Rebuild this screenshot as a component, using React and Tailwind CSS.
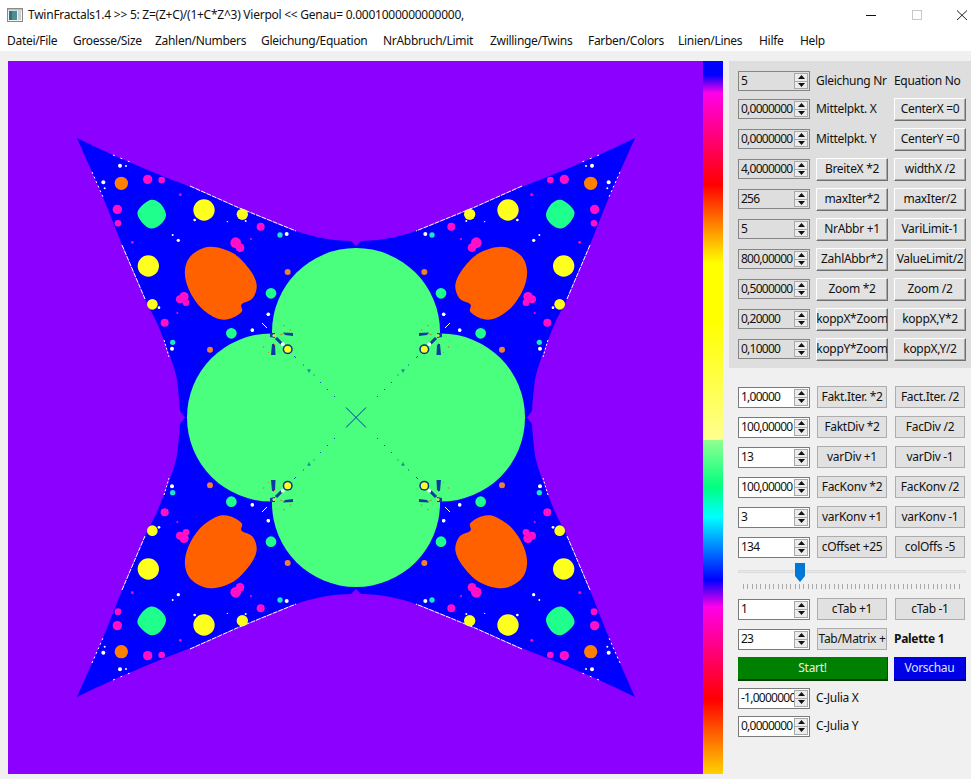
import React from "react";

const P = "#8c00ff", B = "#0000ff", G = "#4aff7e", O = "#ff6000", T = "#1eff8c", Y = "#ffff1e", M = "#ff10c8", W = "#ffffff";

const z = ([x, y]) => [60 + x / 3, 120 + y / 3];

function spline(p, closed) {
  const n = p.length;
  const at = (i) => (closed ? p[(i + n) % n] : p[Math.max(0, Math.min(n - 1, i))]);
  let d = "";
  const last = closed ? n : n - 1;
  for (let i = 0; i < last; i++) {
    const a = at(i - 1), b = at(i), c = at(i + 1), e = at(i + 2);
    const c1 = [b[0] + (c[0] - a[0]) / 6, b[1] + (c[1] - a[1]) / 6];
    const c2 = [c[0] - (e[0] - b[0]) / 6, c[1] - (e[1] - b[1]) / 6];
    d += `C${c1[0].toFixed(1)},${c1[1].toFixed(1)} ${c2[0].toFixed(1)},${c2[1].toFixed(1)} ${c[0].toFixed(1)},${c[1].toFixed(1)}`;
  }
  return d;
}

function smooth(points) {
  const p = points.map(z);
  return `M${p[0][0].toFixed(1)},${p[0][1].toFixed(1)}` + spline(p, true) + "Z";
}

const leftEdge = [[180, 411], [179, 398], [176, 375], [168, 351], [157, 323], [145, 299], [123, 247], [102, 195], [77, 138]];
const topEdge = [[77, 138], [113, 155], [160, 175], [193, 188], [237, 207], [293, 230], [327, 239], [351, 241]];
const outline = "M356,417.5L185,417.5L180,411" + spline(leftEdge, false) + spline(topEdge, false) + "L356,246Z";

const blobs = [
  ["#ff8000", 184, 190, 20], [M, 263, 178, 14], [M, 305, 180, 10], [M, 172, 268, 14], [M, 174, 310, 10],
  [M, 602, 320, 12], [M, 527, 368, 16], [M, 540, 383, 13], [M, 372, 530, 14], [M, 360, 538, 12], [M, 378, 548, 10],
  [M, 314, 608, 12], [T, 633, 520, 16], [T, 514, 640, 16], ["#19e6c8", 660, 345, 8], ["#19e6c8", 338, 667, 8],
  [Y, 432, 270, 32], [Y, 547, 283, 17], [Y, 265, 438, 32], [Y, 277, 553, 16],
  ["#f08030", 683, 456, 9], ["#f08030", 450, 689, 9],
  [W, 355, 361, 5], [W, 338, 345, 3], [W, 625, 583, 5], [W, 577, 631, 5], [W, 680, 342, 6], [W, 336, 686, 6],
  [W, 180, 137, 6], [W, 130, 187, 6], [W, 198, 138, 3], [W, 134, 205, 3], [W, 404, 300, 4], [W, 557, 303, 3], [W, 297, 563, 4], [W, 502, 305, 2],
  [M, 361, 224, 4], [M, 217, 367, 4], [M, 573, 357, 3], [M, 352, 579, 3],
];

function Quadrant({ transform }) {
  return (
    <g transform={transform}>
      <path fill={B} d={outline} />
      <polyline points="190,186 237,207 296,231" fill="none" stroke={W} strokeWidth="1" strokeDasharray="5 1" />
      <polyline points="113,155 135,164" fill="none" stroke={W} strokeWidth="1" strokeDasharray="2 6" />
      <polyline points="122,245 145,299" fill="none" stroke={W} strokeWidth="1" strokeDasharray="5 1" />
      <polyline points="92,172 103,197" fill="none" stroke={W} strokeWidth="1" strokeDasharray="2 3" />
      <polyline points="164,340 169,357" fill="none" stroke={W} strokeWidth="1" strokeDasharray="2 2" />
      <path fill={O} d={smooth([[450, 380], [520, 400], [570, 450], [590, 495], [578, 535], [545, 553], [545, 575], [510, 596], [470, 595], [420, 560], [385, 505], [375, 450], [395, 405]])} />
      <path fill={T} d={smooth([[270, 240], [300, 250], [318, 285], [300, 315], [270, 325], [242, 302], [234, 272]])} />
      {blobs.map(([c, x, y, r], i) => {
        const [cx, cy] = z([x, y]);
        return <circle key={i} cx={cx} cy={cy} r={r / 3} fill={c} />;
      })}
    </g>
  );
}

function Details({ transform }) {
  return (
    <g transform={transform}>
      <circle cx="268.3" cy="314.3" r="1.7" fill={W} />
      <circle cx="252.3" cy="330" r="1.7" fill={W} />
      <line x1="262" y1="323" x2="267" y2="328" stroke={W} strokeWidth="1" />
      <line x1="276" y1="338" x2="282" y2="344" stroke="#0a3ca0" strokeWidth="3" />
      <path d="M283,332.5L293,333L293,336L285,335Z" fill="#0a3ca0" />
      <path d="M272,344L275,344L275.5,355L271,355Z" fill="#0a3ca0" />
      <path d="M270,333L275,333L275,338L270,337Z" fill="#0a3ca0" />
      <circle cx="287.7" cy="349.3" r="5" fill="#05308c" />
      <circle cx="287.7" cy="349.3" r="3.5" fill={Y} />
      <circle cx="282.7" cy="344.3" r="2" fill="#e8fff0" />
      <circle cx="274" cy="335.5" r="1.6" fill="#d8e060" />
      {[[283, 325, 285, 326], [280, 335, 283, 334], [263, 346, 264, 348], [273, 343, 275, 345], [290, 329, 291, 331], [269, 353, 268, 352]].map((t, i) => (
        <line key={i} x1={t[0]} y1={t[1]} x2={t[2]} y2={t[3]} stroke="#c09028" strokeWidth="1" />
      ))}
      <line x1="294" y1="356" x2="296" y2="358" stroke="#0a5ca0" strokeWidth="1" />
      <rect x="303" y="364.5" width="1" height="1" fill="#0a5ca0" />
      <path d="M307.5,369.5h3v1h-1v2h-1v-2h-1z" fill="#0a5ca0" />
      <rect x="313.5" y="374.5" width="1" height="1" fill="#0a5ca0" />
      <rect x="320" y="382" width="1" height="1" fill="#0a5ca0" />
      <rect x="327" y="389" width="1" height="1" fill="#0a5ca0" />
      <rect x="334" y="396" width="1" height="1" fill="#0a5ca0" />
      <line x1="346" y1="407.5" x2="356" y2="417.5" stroke="#1030b8" strokeWidth="1" />
    </g>
  );
}

function Fractal() {
  const mx = "translate(712 0) scale(-1 1)";
  const my = "translate(0 835) scale(1 -1)";
  const mxy = "translate(712 835) scale(-1 -1)";
  return (
    <svg viewBox="8 61 695 713" className="block w-[695px] h-[713px] shrink-0">
      <rect x="8" y="61" width="695" height="713" fill={P} />
      <Quadrant />
      <Quadrant transform={mx} />
      <Quadrant transform={my} />
      <Quadrant transform={mxy} />
      <circle cx="356" cy="332" r="84" fill={G} />
      <circle cx="356" cy="503" r="84" fill={G} />
      <circle cx="271" cy="417.5" r="84" fill={G} />
      <circle cx="441" cy="417.5" r="84" fill={G} />
      <rect x="300" y="360" width="112" height="115" fill={G} />
      <Details />
      <Details transform={mx} />
      <Details transform={my} />
      <Details transform={mxy} />
    </svg>
  );
}

function Arrow({ up }) {
  return (
    <svg width="7" height="4" viewBox="0 0 7 4" className="block">
      <path d={up ? "M3.5,0L7,4H0Z" : "M0,0H7L3.5,4Z"} fill="#111" />
    </svg>
  );
}

function Spin({ value, light }) {
  return (
    <div
      className={`flex w-[72px] ${light ? "h-[21px] border-[#7a7a7a] bg-white" : "h-[20px] border-[#858585] bg-[#dedede]"} items-stretch border overflow-hidden`}
    >
      <div className="w-[55px] shrink-0 overflow-hidden whitespace-nowrap pl-[2px] leading-[18px] tracking-[-0.75px]">{value}</div>
      <div className="ml-auto mr-px my-px flex w-[14px] flex-col border border-[#a8a8a8] bg-[#ececec]">
        <div className="flex flex-1 items-center justify-center border-b border-[#a8a8a8]">
          <Arrow up />
        </div>
        <div className="flex flex-1 items-center justify-center">
          <Arrow />
        </div>
      </div>
    </div>
  );
}

function Raised({ children }) {
  return (
    <div className="flex h-[23px] w-[72px] items-center justify-center overflow-hidden whitespace-nowrap border border-t-white border-l-white border-r-[#6e6e6e] border-b-[#6e6e6e] bg-[#e2e2e2] shadow-[inset_-1px_-1px_0_#a8a8a8]">
      {children}
    </div>
  );
}

function Flat({ children }) {
  return (
    <div className="mx-px flex h-[22px] w-[70px] items-center justify-center overflow-hidden whitespace-nowrap border border-[#adadad] bg-[#e1e1e1]">
      {children}
    </div>
  );
}

function Row({ h = "h-[30px]", children }) {
  return <div className={`grid ${h} grid-cols-[72px_72px_72px] items-center gap-x-[6px]`}>{children}</div>;
}

const menus = [
  ["Datei/File", "w-[66px]"],
  ["Groesse/Size", "w-[82px]"],
  ["Zahlen/Numbers", "w-[106px]"],
  ["Gleichung/Equation", "w-[122px]"],
  ["NrAbbruch/Limit", "w-[107px]"],
  ["Zwillinge/Twins", "w-[98px]"],
  ["Farben/Colors", "w-[90px]"],
  ["Linien/Lines", "w-[81px]"],
  ["Hilfe", "w-[41px]"],
  ["Help", "w-[40px]"],
];

const topRows = [
  ["0,0000000", <span>Mittelpkt. X</span>, <Raised>CenterX =0</Raised>],
  ["0,0000000", <span>Mittelpkt. Y</span>, <Raised>CenterY =0</Raised>],
  ["4,0000000", <Raised>BreiteX *2</Raised>, <Raised>widthX /2</Raised>],
  ["256", <Raised>maxIter*2</Raised>, <Raised>maxIter/2</Raised>],
  ["5", <Raised>NrAbbr +1</Raised>, <Raised>VariLimit-1</Raised>],
  ["800,00000", <Raised>ZahlAbbr*2</Raised>, <Raised>ValueLimit/2</Raised>],
  ["0,5000000", <Raised>Zoom *2</Raised>, <Raised>Zoom /2</Raised>],
  ["0,20000", <Raised>koppX*Zoom</Raised>, <Raised>koppX,Y*2</Raised>],
  ["0,10000", <Raised>koppY*Zoom</Raised>, <Raised>koppX,Y/2</Raised>],
];

const midRows = [
  ["1,00000", "Fakt.Iter. *2", "Fact.Iter. /2"],
  ["100,00000", "FaktDiv *2", "FacDiv /2"],
  ["13", "varDiv +1", "varDiv -1"],
  ["100,00000", "FacKonv *2", "FacKonv /2"],
  ["3", "varKonv +1", "varKonv -1"],
  ["134", "cOffset +25", "colOffs -5"],
];

export default function App() {
  return (
    <div className="h-[779px] w-[971px] overflow-hidden bg-white font-['Noto_Sans',sans-serif] text-[12px] tracking-[-0.3px] text-[#111]">
      <div className="flex h-[30px] items-center pl-[7px]">
        <svg width="16" height="14" viewBox="0 0 16 14" className="mr-[5px] shrink-0">
          <rect x="0.5" y="0.5" width="15" height="13" fill="#f4f4f4" stroke="#8a8a8a" />
          <rect x="2" y="3" width="8" height="9" fill="#4f8f8c" />
          <rect x="2" y="3" width="3" height="9" fill="#2f6f88" />
          <rect x="11" y="3" width="3" height="9" fill="#c8d0d8" />
          <rect x="1" y="1" width="14" height="1.5" fill="#b8c0c8" />
        </svg>
        <span className="whitespace-nowrap tracking-[-0.25px]">TwinFractals1.4 &gt;&gt; 5: Z=(Z+C)/(1+C*Z^3) Vierpol &lt;&lt; Genau= 0.0001000000000000,</span>
        <svg width="120" height="12" viewBox="0 0 120 12" className="ml-auto mr-[4px] shrink-0">
          <line x1="19" y1="6.5" x2="29" y2="6.5" stroke="#111" />
          <rect x="65.5" y="1.5" width="9" height="9" fill="none" stroke="#c8c8c8" />
          <path d="M110,1.5L120,11M120,1.5L110,11" stroke="#222" strokeWidth="1" />
        </svg>
      </div>
      <div className="flex h-[21px] items-center pl-[7px]">
        {menus.map(([t, w]) => (
          <span key={t} className={`${w} shrink-0 whitespace-nowrap`}>
            {t}
          </span>
        ))}
      </div>
      <div className="flex h-[728px] bg-[#f0f0f0] pl-2 pt-[10px]">
        <Fractal />
        <div className="h-[713px] w-[20px] shrink-0 bg-[linear-gradient(to_bottom,#0000ff_0px,#0000ff_14px,#ff00e8_32px,#ff0000_124px,#ffff00_202px,#ffff00_261px,#ffff90_379px,#90ff90_379px,#00ff80_426px,#00ffff_456px,#0000ff_519px,#ff00e8_546px,#ff0000_639px,#ffd000_712px)]" />
        <div className="ml-[6px] w-[242px] shrink-0">
          <div className="bg-[#dedede] pb-[4px] pl-[9px] pt-[7px]">
            <Row h="h-[26px]">
              <Spin value="5" />
              <span className="whitespace-nowrap">Gleichung Nr</span>
              <span className="whitespace-nowrap">Equation No</span>
            </Row>
            {topRows.map(([v, a, b], i) => (
              <Row key={i}>
                <Spin value={v} />
                {a}
                {b}
              </Row>
            ))}
          </div>
          <div className="pl-[9px] pt-[14px]">
            {midRows.map(([v, a, b]) => (
              <Row key={a}>
                <Spin value={v} light />
                <Flat>{a}</Flat>
                <Flat>{b}</Flat>
              </Row>
            ))}
            <div className="relative h-[32px] w-[228px]">
              <div className="absolute left-0 right-0 top-[8px] h-[3px] border border-[#dcdcdc] bg-[#e8e8e8]" />
              <svg width="12" height="19" viewBox="0 0 12 19" className="absolute left-[56px] top-[1px]">
                <path d="M1,0H11V13L6,19L1,13Z" fill="#0078d7" />
              </svg>
              <div className="absolute left-[5px] top-[22px] flex w-[217px] justify-between">
                {Array.from({ length: 51 }, (_, i) => (
                  <div key={i} className="h-[5px] w-px bg-[#a8a8a8]" />
                ))}
              </div>
            </div>
            <Row>
              <Spin value="1" light />
              <Flat>cTab +1</Flat>
              <Flat>cTab -1</Flat>
            </Row>
            <Row>
              <Spin value="23" light />
              <Flat>Tab/Matrix +</Flat>
              <span className="whitespace-nowrap font-bold">Palette 1</span>
            </Row>
            <div className="flex h-[30px] items-center gap-x-[6px]">
              <div className="flex h-[24px] w-[150px] items-center justify-center border-b-2 border-b-[#004000] border-r border-r-[#005000] bg-[#008000] text-[#e8f0e8]">
                Start!
              </div>
              <div className="flex h-[24px] w-[72px] items-center justify-center border-b-2 border-b-[#000060] border-r border-r-[#000060] bg-[#0000e6] text-[#dfe4ff]">
                Vorschau
              </div>
            </div>
            <Row h="h-[28px]">
              <Spin value="-1,0000000" light />
              <span className="whitespace-nowrap">C-Julia X</span>
            </Row>
            <Row h="h-[28px]">
              <Spin value="0,0000000" light />
              <span className="whitespace-nowrap">C-Julia Y</span>
            </Row>
          </div>
        </div>
      </div>
    </div>
  );
}
